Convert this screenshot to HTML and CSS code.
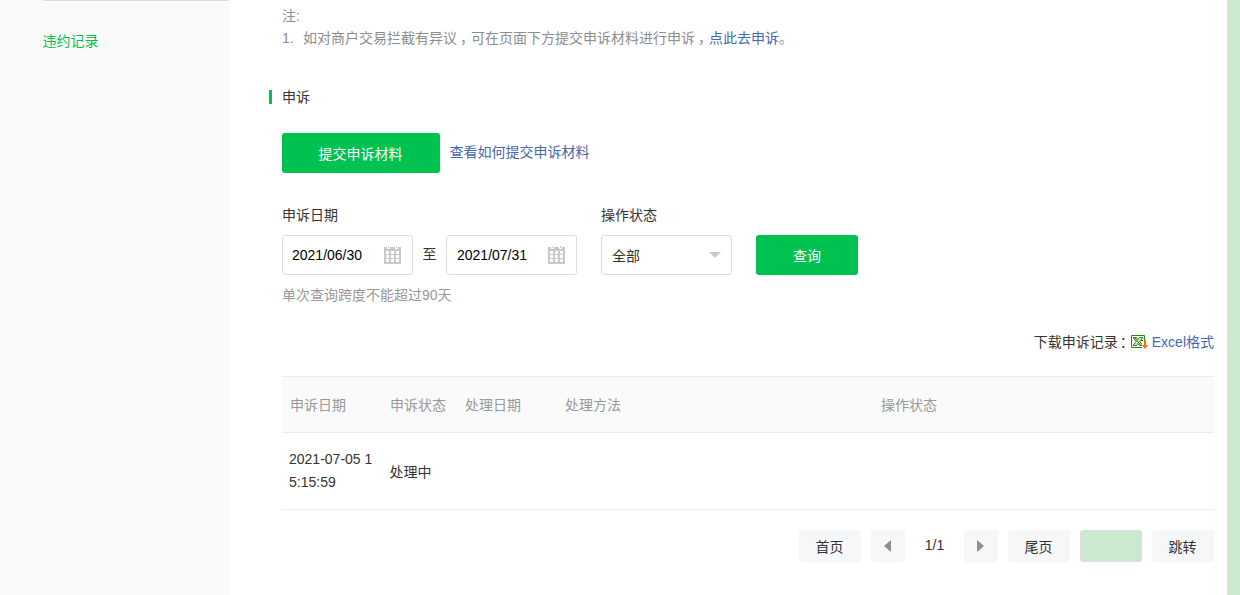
FILE: index.html
```html
<!DOCTYPE html>
<html lang="zh-CN">
<head>
<meta charset="utf-8">
<title>违约记录</title>
<link rel="stylesheet" href="styles.css">
</head>
<body>
<div class="page">
  <aside class="sidebar">
    <nav class="menu"><a class="menu-link">违约记录</a></nav>
  </aside>
  <main class="main">
    <section class="notes">
      <p>注:</p>
      <p class="note-item"><span class="note-num">1.</span><span>如对商户交易拦截有异议<i class="comma">，</i>可在页面下方提交申诉材料进行申诉<i class="comma">，</i><a class="link">点此去申诉</a>。</span></p>
    </section>
    <h2 class="title">申诉</h2>
    <div class="submit-row">
      <button class="btn btn-submit">提交申诉材料</button>
      <a class="link">查看如何提交申诉材料</a>
    </div>
    <form class="filters">
      <div class="field-group dates-group">
        <label>申诉日期</label>
        <div class="dates">
          <div class="field"><span>2021/06/30</span>
            <svg class="cal" width="17" height="18" viewBox="0 0 17 18" shape-rendering="crispEdges"><path fill="#c9c9c9" fill-rule="evenodd" d="M0 1h3v2h3V1h5v2h3V1h3v17H0zM2 5v3h3V5zM7 5v3h3V5zM12 5v3h3V5zM2 9v3h3V9zM7 9v3h3V9zM12 9v3h3V9zM2 13v3h3v-3zM7 13v3h3v-3zM12 13v3h3v-3z"/><path fill="#c9c9c9" d="M4 0h1v2H4zM12 0h1v2h-1z"/></svg>
          </div>
          <span class="to">至</span>
          <div class="field"><span>2021/07/31</span>
            <svg class="cal" width="17" height="18" viewBox="0 0 17 18" shape-rendering="crispEdges"><path fill="#c9c9c9" fill-rule="evenodd" d="M0 1h3v2h3V1h5v2h3V1h3v17H0zM2 5v3h3V5zM7 5v3h3V5zM12 5v3h3V5zM2 9v3h3V9zM7 9v3h3V9zM12 9v3h3V9zM2 13v3h3v-3zM7 13v3h3v-3zM12 13v3h3v-3z"/><path fill="#c9c9c9" d="M4 0h1v2H4zM12 0h1v2h-1z"/></svg>
          </div>
        </div>
      </div>
      <div class="field-group">
        <label>操作状态</label>
        <div class="field select"><span>全部</span><svg width="12" height="6" viewBox="0 0 12 6"><path fill="#c9c9c9" d="M0 0h12L6 6z"/></svg></div>
      </div>
      <button type="button" class="btn btn-query">查询</button>
    </form>
    <p class="hint">单次查询跨度不能超过90天</p>
    <div class="download">
      <span>下载申诉记录<i class="colon">：</i></span>
      <svg width="17" height="14" viewBox="0 0 17 14"><path fill="#fff" stroke="#2b8a0e" d="M.5.5h13v12H.5z"/><path fill="#d5ecca" stroke="#2b8a0e" d="M2 2.500h3.500l1.500 2 1.500-2H12L8.800 6.500l3.200 4H8.500L7 8.500l-1.500 2H2l3.200-4z"/><path stroke="#2b8a0e" d="M4 3l5.500 7M10 5.500h3"/><path fill="#fff" d="M12 5h5v9h-6V9h1z"/><path fill="#ff6a00" d="M13 5h2v5h2l-3 4-3-4h2z"/></svg>
      <a class="link">Excel格式</a>
    </div>
    <table class="records">
      <colgroup><col class="c1"><col class="c2"><col class="c3"><col class="c4"><col></colgroup>
      <thead><tr><th>申诉日期</th><th>申诉状态</th><th>处理日期</th><th>处理方法</th><th>操作状态</th></tr></thead>
      <tbody><tr><td class="time">2021-07-05 1<br>5:15:59</td><td class="state">处理中</td><td></td><td></td><td></td></tr></tbody>
    </table>
    <div class="pager">
      <a class="page-btn">首页</a>
      <a class="page-btn arrow"><svg width="7" height="12" viewBox="0 0 7 12"><path fill="#8f8f8f" d="M7 0v12L0 6z"/></svg></a>
      <span class="count">1/1</span>
      <a class="page-btn arrow"><svg width="7" height="12" viewBox="0 0 7 12"><path fill="#8f8f8f" d="M0 0v12l7-6z"/></svg></a>
      <a class="page-btn">尾页</a>
      <input class="page-input" type="text" aria-label="页码">
      <a class="page-btn">跳转</a>
    </div>
  </main>
</div>
</body>
</html>
```
FILE: styles.css
```css
* { box-sizing: border-box; }
body {
  margin: 0;
  background: #cce8cf;
  font: 14px/22px "Liberation Sans", "Noto Sans CJK SC", sans-serif;
  color: #333;
}
p, h2 { margin: 0; font-weight: normal; font-size: 14px; }
i { font-style: normal; }
.page { display: flex; width: 1227px; height: 595px; background: #fff; overflow: hidden; }
.sidebar { width: 229px; background: #fafafa; padding-left: 43px; }
.menu { border-top: 1px solid #ddd; padding-top: 29px; }
.menu-link { display: block; margin-left: -0.5px; color: #06c152; }
.main { flex: 1; padding: 5px 13px 0 53px; }
.link { color: #4668b0; }
.notes { color: #8d8d8d; height: 44px; }
.note-item { display: flex; white-space: nowrap; }
.note-num { width: 21px; }
/* half-width punctuation, centred in a full-width cell */
.comma, .colon { display: inline-block; width: 14px; padding-left: 3px; font-feature-settings: "halt"; }
.colon { padding-left: 2px; }
.title { display: flex; align-items: center; height: 22px; margin: 37px 0 0 -13px; }
.title::before { content: ""; width: 3px; height: 14px; margin-right: 10px; background: #00c250; }
.submit-row { display: flex; gap: 9.5px; margin-top: 25px; line-height: 38px; }
.btn { border: 0; border-radius: 3px; height: 40px; padding: 2px 0 0; background: #00c250; color: #fff; font: inherit; line-height: 38px; }
.btn-submit { width: 158px; padding-right: 1px; }
.btn-query { width: 102px; }
.filters { display: flex; align-items: flex-end; gap: 24px; margin-top: 31px; }
.field-group label { display: block; height: 22px; margin-bottom: 9px; }
.dates { display: flex; align-items: center; }
.field { display: flex; align-items: center; justify-content: space-between; width: 131px; height: 40px; padding: 0 11px 0 9px; border: 1px solid #ddd; border-radius: 3px; color: #000; }
.to { width: 33px; padding-bottom: 2px; text-align: center; }
.to + .field { padding-left: 10px; }
.select { color: #333; padding: 0 10px; }
.select span { padding-top: 2px; }
.hint { margin-top: 9px; color: #999; }
.download { display: flex; align-items: center; justify-content: flex-end; margin-top: 25px; white-space: nowrap; }
.download svg { margin-right: 4px; }
.download span { margin-right: -1px; }
.records { width: 100%; margin-top: 23px; border-collapse: separate; border-spacing: 0; table-layout: fixed; }
.c1 { width: 100px; } .c2 { width: 75px; } .c3 { width: 100px; } .c4 { width: 316px; }
.records th { height: 57px; padding: 0 8px; text-align: left; font-weight: normal; color: #999; background: #fafafa; border-top: 1px solid #ececec; border-bottom: 1px solid #ececec; }
.records td { height: 77px; padding: 0 0 0 8px; border-bottom: 1px solid #ececec; line-height: 23px; }
.records .time { padding-left: 7px; }
.records .state { padding: 2px 0 0 7.5px; }
.pager { display: flex; gap: 10px; justify-content: flex-end; margin-top: 20px; }
.page-btn { display: flex; align-items: center; justify-content: center; width: 62px; height: 32px; padding: 1px 1px 0 0; background: #f6f7f9; border-radius: 3px; }
.arrow { width: 34px; padding: 0 1px 0 0; }
.count { width: 39px; text-align: center; line-height: 30px; }
.page-input { width: 62px; height: 32px; border: 1px solid #ddd; border-radius: 3px; background: #cce8cf; padding: 0 8px; }
```
